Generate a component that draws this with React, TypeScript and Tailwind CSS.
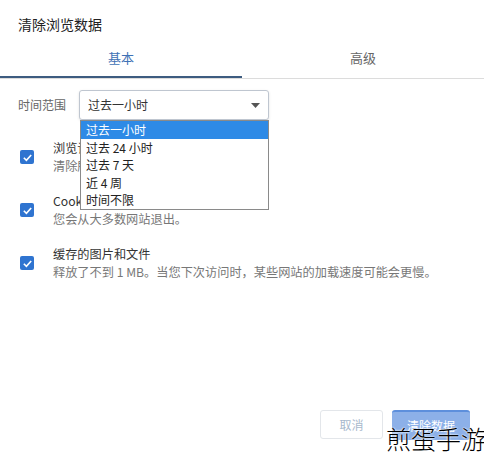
import React from 'react'

const font = { fontFamily: '"Noto Sans CJK SC", "Noto Sans", sans-serif' }

const options = ['过去一小时', '过去 24 小时', '过去 7 天', '近 4 周', '时间不限']

const rows = [
    { title: '浏览记录', desc: '清除所有已同步设备中的记录' },
    { title: 'Cookie 及其他网站数据', desc: '您会从大多数网站退出。' },
    { title: '缓存的图片和文件', desc: '释放了不到 1 MB。当您下次访问时，某些网站的加载速度可能会更慢。' },
]

const Check = () => (
    <div className='w-[14px] h-[14px] rounded-[2px] bg-[#2f74d0] flex items-center justify-center shrink-0'>
        <svg width='11' height='11' viewBox='0 0 12 12'>
            <path d='M2 6.3 L4.8 9 L10 3.2' fill='none' stroke='white' strokeWidth='1.8' />
        </svg>
    </div>
)

const App = () => {
    return (
        <div className='w-[484px] h-[454px] bg-white relative overflow-hidden text-[#333]' style={font}>
            <div className='pt-[14px] pl-[18px] h-[44px] text-[14px] text-[#222]'>清除浏览数据</div>

            <div className='flex border-b border-[#dcdcdc] h-[35px]'>
                <div className='w-1/2 text-center text-[13px] text-[#3f72b5] border-b-2 border-[#3d5c80] pt-[4px]'>基本</div>
                <div className='w-1/2 text-center text-[13px] text-[#666] pt-[4px]'>高级</div>
            </div>

            <div className='flex items-center pl-[18px] mt-[11px] relative'>
                <span className='w-[61px] text-[12px] text-[#666]'>时间范围</span>
                <div className='w-[190px] h-[30px] border border-[#bfc6d0] rounded-[3px] flex items-center justify-between pl-[8px] pr-[8px] text-[12px] bg-white shadow-sm'>
                    <span>过去一小时</span>
                    <svg width='9' height='5' viewBox='0 0 9 5'><path d='M0 0 H9 L4.5 5 Z' fill='#555' /></svg>
                </div>
                <div className='absolute left-[80px] top-[30px] w-[189px] border border-[#8a8a8a] bg-white z-10 text-[12px] leading-[17.6px]'>
                    {options.map((o, i) => (
                        <div key={o} className={i === 0 ? 'bg-[#2e8ae6] text-white pl-[5px] pr-2' : 'pl-[5px] pr-2 text-[#222]'}>{o}</div>
                    ))}
                </div>
            </div>

            <div className='flex flex-col gap-[17px] mt-[19px]'>
                {rows.map(({ title, desc }) => (
                    <div key={title} className='flex items-center pl-[20px] gap-[19px]'>
                        <Check />
                        <div className='flex flex-col text-[12.2px] leading-[18px]'>
                            <span className='text-[#333]'>{title}</span>
                            <span className='text-[#777]'>{desc}</span>
                        </div>
                    </div>
                ))}
            </div>

            <div className='absolute right-[14px] top-[410px] flex gap-[9px]'>
                <button className='w-[63px] h-[29px] border border-[#e3e6ea] rounded-[3px] text-[12px] text-[#a8b8cc] bg-white'>取消</button>
                <button className='w-[78px] h-[30px] rounded-[3px] text-[12px] text-white bg-[#8cb0e8] border-t-2 border-[#5d8fdc]'>清除数据</button>
            </div>

            <div
                className='absolute right-[-2px] bottom-[0px] text-[25px] leading-[32px] font-light text-black z-20'
                style={{ textShadow: '0 0 2px #fff, 0 0 2px #fff' }}
            >
                煎蛋手游
            </div>
        </div>
    )
}

export default App
